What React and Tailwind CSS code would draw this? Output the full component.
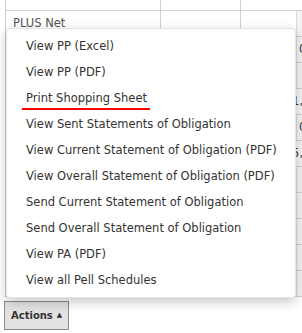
export default function App() {
  const items = [
    "View PP (Excel)",
    "View PP (PDF)",
    "Print Shopping Sheet",
    "View Sent Statements of Obligation",
    "View Current Statement of Obligation (PDF)",
    "View Overall Statement of Obligation (PDF)",
    "Send Current Statement of Obligation",
    "Send Overall Statement of Obligation",
    "View PA (PDF)",
    "View all Pell Schedules",
  ];
  const rows = [
    { label: "PLUS Net", v: "" },
    { label: "", v: "0.00" },
    { label: "", v: "" },
    { label: "", v: "1,000" },
    { label: "", v: "0.00" },
    { label: "", v: "5,000" },
    { label: "", v: "" },
    { label: "", v: "" },
    { label: "", v: "" },
    { label: "", v: "" },
    { label: "", v: "" },
  ];
  return (
    <div className="relative w-[302px] h-[333px] overflow-hidden bg-white text-[#555] font-['DejaVu_Sans',sans-serif]">
      <div className="mt-[-16px] ml-[5px] w-[320px] border-l border-[#d0d0d0]">
        <div className="flex h-[27px] border-b border-[#d0d0d0] text-[11.5px]">
          <div className="w-[155px] border-r border-[#d0d0d0] pl-[7px] flex items-center">PLUS Gross</div>
          <div className="w-[80px] border-r border-[#d0d0d0]" />
          <div className="flex-1" />
        </div>
        {rows.map((r, i) => (
          <div key={i} className="flex h-[26px] border-b border-[#d0d0d0] text-[11.5px]">
            <div className="w-[155px] border-r border-[#d0d0d0] pl-[7px] flex items-center">{r.label}</div>
            <div className="w-[80px] border-r border-[#d0d0d0]" />
            <div className="w-[55px]" />
            <div className="flex-1 bg-[#f4f4f4] border-l border-[#dcdcdc] pl-[2px] flex items-center text-[#333]">{r.v}</div>
          </div>
        ))}
      </div>
      <div className="ml-[4px] mt-[4px] inline-flex items-center h-[29px] px-[6px] border border-[#8a8a8a] bg-[#e2e2e2] text-[#333] font-bold text-[10px] gap-[4px]">
        <span>Actions</span>
        <span className="text-[7px]">▲</span>
      </div>
      <div className="absolute left-[6px] top-[28px] w-[290px] pt-[5px] pb-[3px] bg-white rounded-[4px] border border-[#e4e4e4] shadow-[0_4px_12px_rgba(0,0,0,0.22)]">
        {items.map((t, i) => (
          <div key={i} className="h-[26px] flex items-center pl-[19px] text-[11.5px] text-[#333]">
            <span className={i === 2 ? "relative" : ""}>
              {t}
              {i === 2 && <span className="absolute left-[-4px] right-[-3px] top-[18px] h-[2px] bg-[#ff0000]" />}
            </span>
          </div>
        ))}
      </div>
    </div>
  );
}
